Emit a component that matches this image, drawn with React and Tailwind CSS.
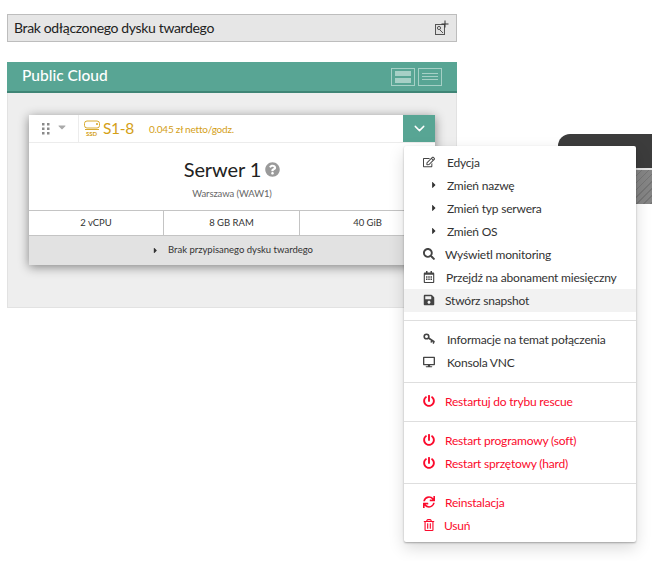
import React from "react";
import { FaRegEdit, FaSearch, FaRegCalendarAlt, FaSave, FaDesktop, FaPowerOff, FaSync, FaRegTrashAlt, FaCaretRight, FaCaretDown, FaQuestionCircle } from "react-icons/fa";
import { FiChevronDown } from "react-icons/fi";

const font = "[font-family:'Lato','Noto_Sans',sans-serif]";

function KeyIcon() {
  return (
    <svg width="13" height="11" viewBox="0 0 13 11" fill="none" stroke="#444" strokeWidth="1.6">
      <circle cx="3.5" cy="3.5" r="2.3" />
      <path d="M5.5 5l6 4M9 7.5l-1 2M11 9l-1 1.5" />
    </svg>
  );
}

function Row({ icon, label, red, hover, textPl = "pl-[41px]", caret }) {
  return (
    <div className={`relative h-[23px] flex items-center pt-[1px] text-[12px] tracking-[-0.2px] ${textPl} ${red ? "text-[#fb0a2c]" : "text-[#333]"} ${hover ? "bg-[#f2f2f2]" : ""}`}>
      {caret ? (
        <FaCaretRight className="absolute left-[25px] top-[6px] text-[10px] text-[#333]" />
      ) : (
        <span className={`absolute left-[17px] top-[3px] w-[16px] h-[15px] flex items-center justify-center text-[12px] ${red ? "text-[#fb0a2c]" : "text-[#444]"}`}>{icon}</span>
      )}
      {label}
    </div>
  );
}

function Divider() {
  return <div className="h-px bg-[#dedede] mt-[8px] mb-[7px]" />;
}

export default function App() {
  return (
    <div className={`relative w-[652px] h-[561px] overflow-hidden bg-white ${font}`}>
      <div className="absolute left-[558px] top-[134px] w-[94px]">
        <div className="h-[34px] bg-[#3c3c3c] rounded-tl-[12px]" />
        <div className="h-[2px] bg-[#e4e4e4]" />
        <div className="h-[34px] bg-[#808080] bg-[repeating-linear-gradient(135deg,#858585_0,#858585_4px,#757575_4px,#757575_5px)]" />
      </div>

      <div className="relative pt-[14px] pl-[7px] w-[457px]">
        <div className="h-[28px] border border-[#bdbdbd] bg-[#e6e6e6] flex items-center justify-between pl-[6px] pr-[7px]">
          <span className="text-[14px] tracking-[-0.35px] text-[#222] -mt-[2px]">Brak odłączonego dysku twardego</span>
          <svg width="15" height="16" viewBox="0 0 15 16" fill="none" stroke="#555" strokeWidth="1">
            <rect x="1.5" y="4.5" width="9" height="10" fill="#e0e0e0" />
            <circle cx="5" cy="8" r="1.6" />
            <path d="M6 10l3 3" />
            <path d="M11 0.5v7M7.5 4h7" stroke="#333" />
          </svg>
        </div>

        <div className="mt-[20px] h-[31px] bg-[#58a594] border-b-2 border-[#3f8576] flex items-center justify-between pl-[15px] pr-[15px]">
          <span className="text-white text-[15.5px] font-medium -mt-[1px]">Public Cloud</span>
          <div className="flex gap-[3px]">
            <div className="w-[24px] h-[18px] border border-[#a6d0c6] flex flex-col justify-center gap-[2px] px-[3px]">
              <div className="h-[5px] bg-[#a6d0c6]" />
              <div className="h-[5px] bg-[#a6d0c6]" />
            </div>
            <div className="w-[24px] h-[18px] border border-[#a6d0c6] flex flex-col justify-center gap-[2px] px-[3px]">
              <div className="h-px bg-[#a6d0c6]" />
              <div className="h-px bg-[#a6d0c6]" />
              <div className="h-px bg-[#a6d0c6]" />
            </div>
          </div>
        </div>

        <div className="h-[215px] bg-[#eeeeee] border border-t-0 border-[#e2e2e2] pt-[22px] pl-[21px]">
          <div className="w-[406px] h-[150px] bg-white shadow-[0_2px_10px_rgba(0,0,0,0.45)] flex flex-col">
            <div className="h-[28px] flex border-b border-[#ececec]">
              <div className="w-[50px] border-r border-[#ececec] flex items-center pl-[13px] gap-[6px]">
                <svg width="8" height="12" viewBox="0 0 8 12" fill="#8a8a8a">
                  <rect x="0" y="0" width="2.5" height="2.5" /><rect x="5" y="0" width="2.5" height="2.5" />
                  <rect x="0" y="4.5" width="2.5" height="2.5" /><rect x="5" y="4.5" width="2.5" height="2.5" />
                  <rect x="0" y="9" width="2.5" height="2.5" /><rect x="5" y="9" width="2.5" height="2.5" />
                </svg>
                <FaCaretDown className="text-[12px] text-[#aaa] -mt-[3px]" />
              </div>
              <div className="flex items-center pl-[5px] text-[#d4a017]">
                <svg width="17" height="17" viewBox="0 0 17 17" fill="none" stroke="#d4a017" strokeWidth="0.9">
                  <rect x="0.5" y="1" width="15" height="7" rx="2.5" />
                  <path d="M1 9.5h14" />
                  <circle cx="13" cy="4" r="0.6" fill="#d4a017" />
                  <text x="2" y="16" fontSize="6" fontWeight="700" fill="#d4a017" stroke="none" fontFamily="Lato">SSD</text>
                </svg>
                <span className="ml-[2px] text-[15.5px] tracking-[-0.3px] leading-none">S1-8</span>
                <span className="ml-[15px] text-[10px] tracking-[-0.2px] mt-px">0.045 zł netto/godz.</span>
              </div>
              <div className="ml-auto w-[32px] bg-[#58a594] flex items-center justify-center">
                <FiChevronDown className="text-white text-[17px]" />
              </div>
            </div>
            <div className="flex-1 flex flex-col items-center pt-[12px]">
              <div className="flex items-center gap-[4px]">
                <span className="text-[20px] leading-[28px] tracking-[-0.1px] text-[#222]">Serwer 1</span>
                <FaQuestionCircle className="text-[15px] text-[#9a9a9a]" />
              </div>
              <span className="text-[9.5px] tracking-[-0.1px] leading-[13px] mt-[4px] text-[#666]">Warszawa (WAW1)</span>
            </div>
            <div className="h-[26px] grid grid-cols-[135px_136px_135px] border-y border-[#c4c4c4] text-[9.5px] text-[#333]">
              <div className="flex items-center justify-center border-r border-[#c4c4c4]">2 vCPU</div>
              <div className="flex items-center justify-center border-r border-[#c4c4c4]">8 GB RAM</div>
              <div className="flex items-center justify-center">40 GiB</div>
            </div>
            <div className="h-[29px] bg-[#e2e2e2] flex items-center justify-center gap-[8px] text-[9.5px] text-[#333]">
              <FaCaretRight className="text-[9px]" />
              Brak przypisanego dysku twardego
            </div>
          </div>
        </div>
      </div>

      <div className="absolute left-[404px] top-[146px] w-[232px] h-[396px] bg-white rounded-[2px] shadow-[0_1px_2px_rgba(0,0,0,0.3),0_6px_16px_rgba(0,0,0,0.15)] pt-[5px]">
        <Row icon={<FaRegEdit />} label="Edycja" textPl="pl-[43px]" />
        <Row caret label="Zmień nazwę" textPl="pl-[43px]" />
        <Row caret label="Zmień typ serwera" textPl="pl-[43px]" />
        <Row caret label="Zmień OS" textPl="pl-[43px]" />
        <Row icon={<FaSearch />} label="Wyświetl monitoring" />
        <Row icon={<FaRegCalendarAlt />} label="Przejdź na abonament miesięczny" textPl="pl-[42px]" />
        <Row icon={<FaSave />} label="Stwórz snapshot" hover />
        <Divider />
        <Row icon={<KeyIcon />} label="Informacje na temat połączenia" textPl="pl-[43px]" />
        <Row icon={<FaDesktop />} label="Konsola VNC" textPl="pl-[43px]" />
        <Divider />
        <Row icon={<FaPowerOff />} label="Restartuj do trybu rescue" red />
        <Divider />
        <Row icon={<FaPowerOff />} label="Restart programowy (soft)" red />
        <Row icon={<FaPowerOff />} label="Restart sprzętowy (hard)" red />
        <Divider />
        <Row icon={<FaSync />} label="Reinstalacja" red />
        <Row icon={<FaRegTrashAlt />} label="Usuń" red textPl="pl-[40px]" />
      </div>
    </div>
  );
}
